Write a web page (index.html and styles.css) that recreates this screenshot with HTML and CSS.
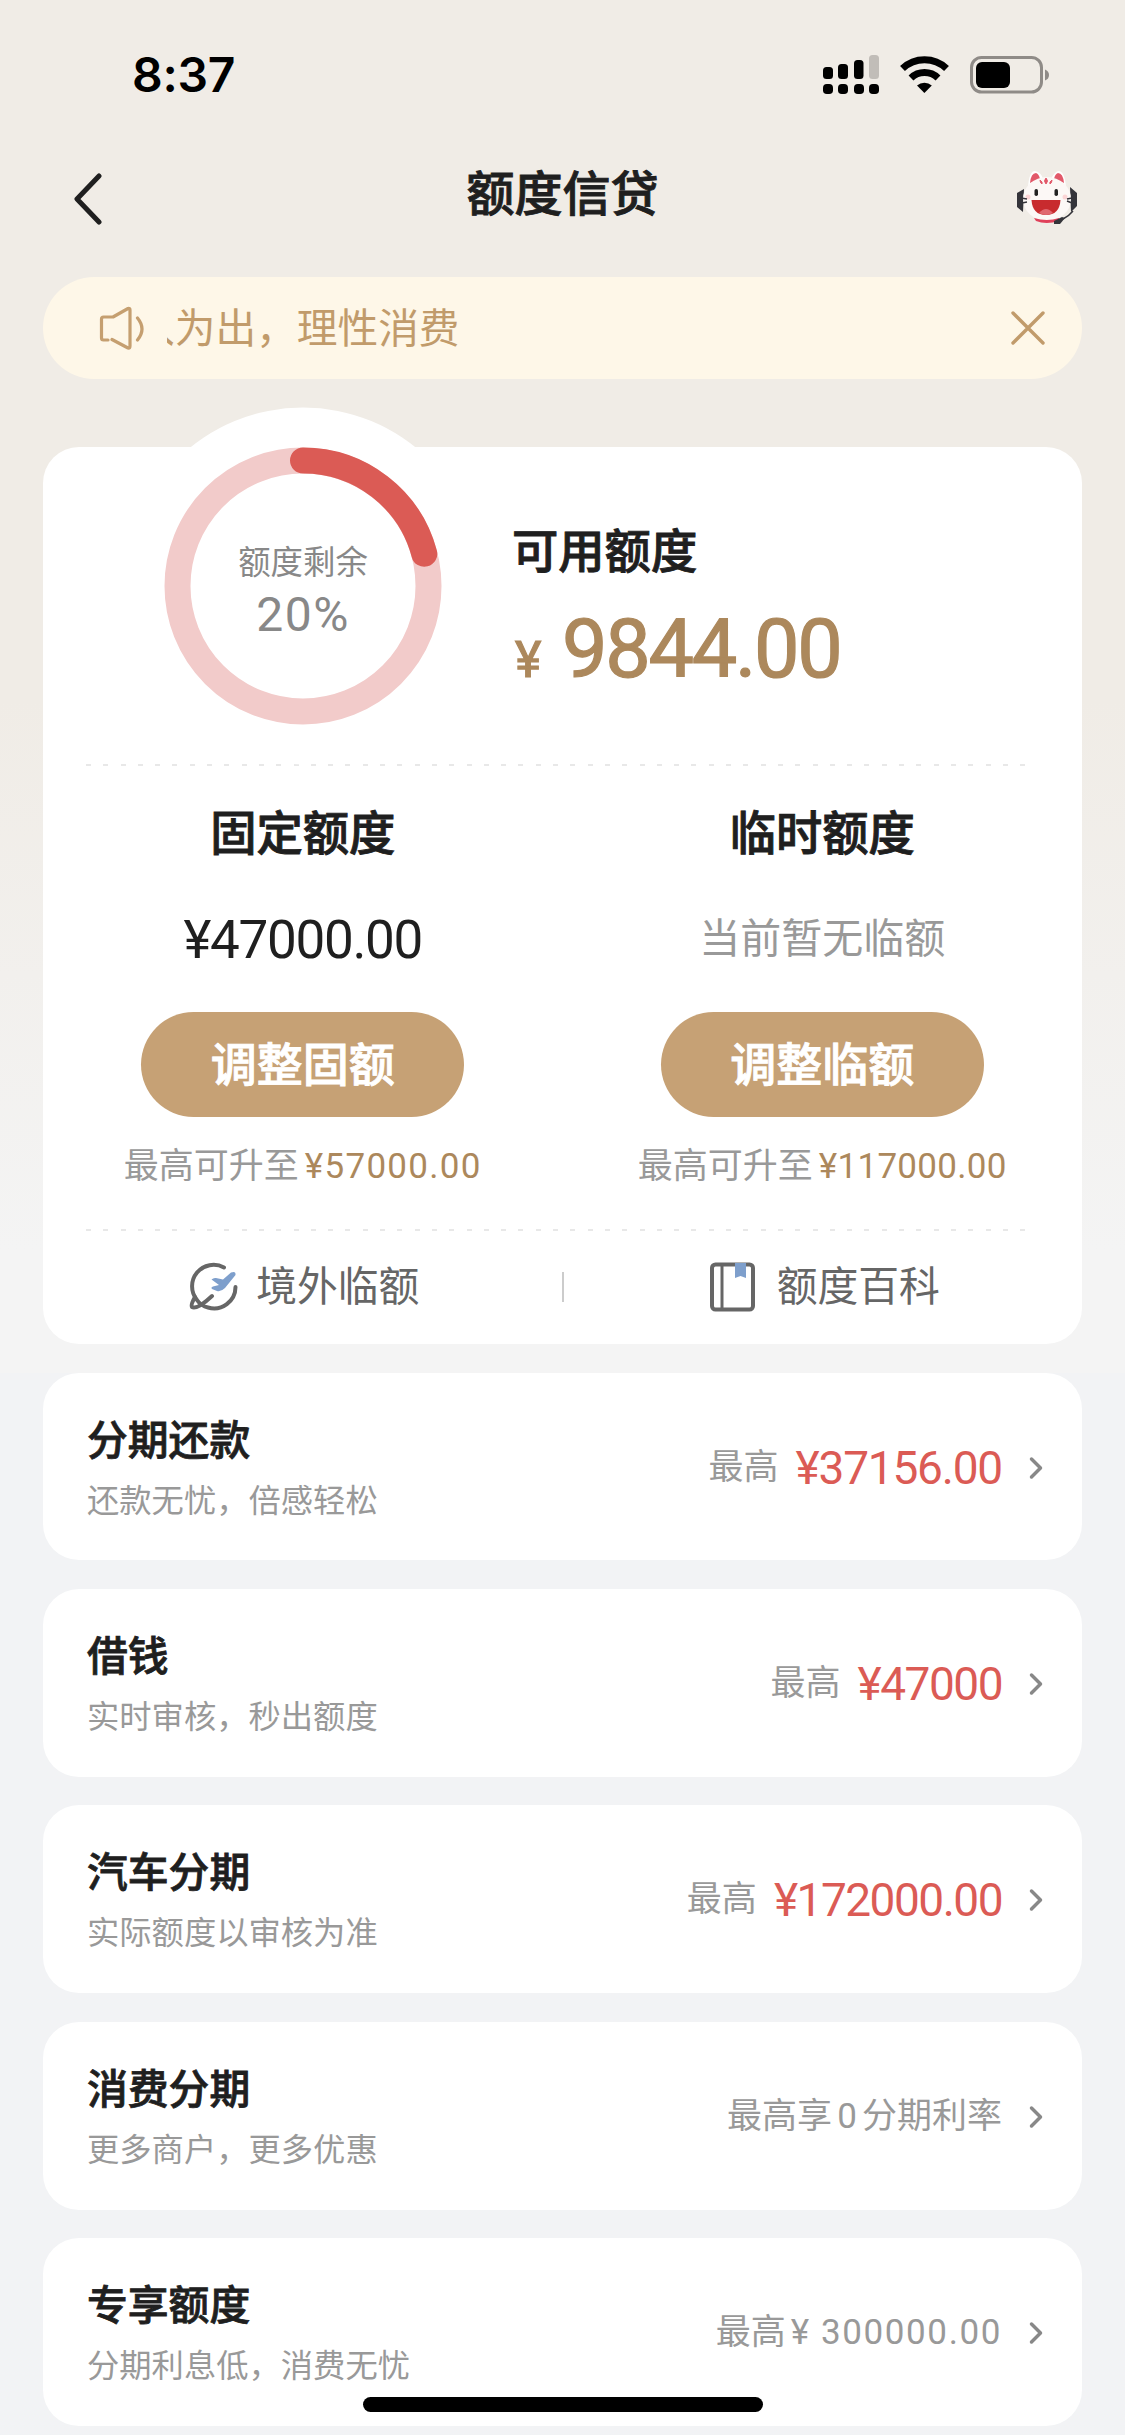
FILE: index.html
```html
<!DOCTYPE html>
<html lang="zh-CN">
<head>
<meta charset="utf-8">
<title>额度信贷</title>
<link rel="stylesheet" href="styles.css">
</head>
<body>
<div class="screen">
  <div class="status">
    <span class="time">8:37</span>
    <svg class="status-icons" width="228" height="44" viewBox="0 0 228 44">
      <rect x="0" y="13" width="10" height="12" rx="3.5"/><rect x="15" y="10" width="10" height="15" rx="3.5"/><rect x="31" y="6" width="9.500" height="19" rx="3.500"/><rect x="46" y="1" width="10" height="24" rx="3.500" fill="#c1bdb8"/>
      <rect x="0" y="30" width="10" height="10" rx="3.800"/><rect x="15" y="30" width="10" height="10" rx="3.800"/><rect x="31" y="30" width="10" height="10" rx="3.800"/><rect x="46" y="30" width="10" height="10" rx="3.800"/>
      <g fill="none" stroke="#000" stroke-width="7"><path d="M79.500 14.500a32 32 0 0 1 44 0"/><path d="M88 24a19.500 19.500 0 0 1 27 0"/></g>
      <path d="M94 31.500a11 11 0 0 1 14.800 0L101.400 39z"/>
      <rect x="148.500" y="3.500" width="70" height="34.500" rx="10" fill="none" stroke="#8f8b87" stroke-width="3"/>
      <rect x="153" y="8" width="34" height="26" rx="6"/>
      <path d="M222 15.500q4 1.500 4 5.500t-4 5.500z" fill="#8f8b87"/>
    </svg>
  </div>

  <header class="nav">
    <svg class="back" width="30" height="52" viewBox="0 0 30 52"><path d="M26 3 4 26l22 23" fill="none" stroke="#1f1f1f" stroke-width="5" stroke-linecap="round" stroke-linejoin="round"/></svg>
    <h1>额度信贷</h1>
    <svg class="cat" width="62" height="56" viewBox="0 0 62 56">
      <path d="M8 19 1 23v14l6 5zM54 17l7 6v13l-6 6z" fill="#34343a"/>
      <path d="M12 18Q13 1 19 1q6 1 8 8l8 0Q39 1 43 1q6 1 7 17z" fill="#fff"/>
      <path d="M14 13q1-10 6-10 3 1 4 6zM48 13q-1-10-6-10-3 1-4 6z" fill="#e2596a"/>
      <ellipse cx="31" cy="29" rx="24" ry="22" fill="#fcf8f6"/>
      <path d="M18 48q13 4 25 0v3q-13 4-23 0z" fill="#e0405a"/>
      <path d="M30 8q3 3 0 6-3-3 0-6zM24 10q3 2 2 4-2-1-2-4zM36 10q-3 2-2 4 2-1 2-4z" fill="#e2596a" stroke="#e2596a"/>
      <rect x="18.500" y="19" width="3.500" height="7" rx="1.700" fill="#222"/><rect x="38.500" y="19" width="3.500" height="7" rx="1.700" fill="#222"/>
      <path d="M15.500 30h29q-1 15-14.500 15T15.500 30z" fill="#c82b2e"/>
      <path d="M23 43q7-8 14 0-7 4-14 0z" fill="#e0676f"/>
      <circle cx="12" cy="27" r="2.500" fill="#fbd5d6"/><circle cx="49" cy="27" r="2.500" fill="#fbd5d6"/>
      <path d="M5 28l6 1M6 33l5-1M51 29l5-1M51 31l5 2M57 41q-4 5-10 8" fill="none" stroke="#34343a" stroke-width="1.400"/>
      <path d="M38 51l8-4 3 1-5 6h-6z" fill="#34343a"/>
    </svg>
  </header>

  <div class="notice">
    <svg class="horn" width="48" height="44" viewBox="0 0 48 44" fill="none" stroke="#c59f70" stroke-width="3.200" stroke-linecap="round" stroke-linejoin="round"><path d="M9 34H4.500Q2.500 34 2.500 32V13Q2.500 11 4.500 11H14L29 2.500Q31 2 31 4V40Q31 42.500 29 42L13 33.500"/><path d="M38.500 12q9 11 0 22"/></svg>
    <div class="marquee"><span>入为出，理性消费</span></div>
    <svg class="close" width="34" height="34" viewBox="0 0 34 34"><path d="M2 2l30 30M32 2 2 32" stroke="#c19b6b" stroke-width="3.400" stroke-linecap="round"/></svg>
  </div>

  <section class="card quota">
    <div class="summary">
      <div class="gauge">
        <svg class="ring" width="358" height="358" viewBox="0 0 358 358">
          <circle cx="179" cy="179" r="178.500" fill="#fff"/>
          <circle cx="179" cy="179" r="125.500" fill="none" stroke="#f2cbca" stroke-width="26"/>
          <path d="M179 53.500A125.500 125.500 0 0 1 300.300 146.800" fill="none" stroke="#db5b55" stroke-width="26" stroke-linecap="round"/>
        </svg>
        <div class="gauge-text"><span class="gauge-label">额度剩余</span><span class="gauge-value">20%</span></div>
      </div>
      <div class="available">
        <h2>可用额度</h2>
        <p class="total"><span class="yen">¥</span><span class="total-num">9844.00</span></p>
      </div>
    </div>
    <div class="dash"></div>
    <div class="columns">
      <div class="col">
        <h2>固定额度</h2>
        <p class="fixed">¥47000.00</p>
        <button class="adjust">调整固额</button>
        <p class="upto">最高可升至<span class="gold">¥57000.00</span></p>
      </div>
      <div class="col">
        <h2>临时额度</h2>
        <p class="none">当前暂无临额</p>
        <button class="adjust">调整临额</button>
        <p class="upto">最高可升至<span class="gold tight">¥117000.00</span></p>
      </div>
    </div>
    <div class="dash"></div>
    <div class="links">
      <div class="link">
        <svg width="50" height="50" viewBox="0 0 50 50"><g fill="none" stroke="#666" stroke-width="4" stroke-linecap="round" stroke-linejoin="round"><path d="M36 5.500A21.500 21.500 0 0 0 9 38Q13 44 20 45.500A21.500 21.500 0 0 0 47.500 25"/><path d="M7 35Q2.500 43 4 45Q9 48 24 34"/></g><path d="M23.500 17.500q2-2 4.500-1.500l7 1.500 8-7q5-2 4.500 2.500L37 26q-4 4-8 3l-5-2q-2-2 3-3l4-1z" fill="#7e9fcc"/></svg>
        <span>境外临额</span>
      </div>
      <i class="divider"></i>
      <div class="link">
        <svg width="50" height="50" viewBox="0 0 50 50"><rect x="3" y="2.500" width="41" height="45" rx="3.500" fill="none" stroke="#666" stroke-width="4"/><path d="M13 3v44" stroke="#666" stroke-width="3"/><path d="M26 1h11v15l-5.500-2-5.500 2z" fill="#7e9fcc"/></svg>
        <span>额度百科</span>
      </div>
    </div>
  </section>

  <section class="card row">
    <div class="info"><h3>分期还款</h3><p>还款无忧，倍感轻松</p></div>
    <div class="value">最高<span class="red loose">¥37156.00</span></div>
    <svg class="chev" width="14" height="24" viewBox="0 0 14 24"><path d="M2.500 3l9 9-9 9"/></svg>
  </section>
  <section class="card row">
    <div class="info"><h3>借钱</h3><p>实时审核，秒出额度</p></div>
    <div class="value">最高<span class="red">¥47000</span></div>
    <svg class="chev" width="14" height="24" viewBox="0 0 14 24"><path d="M2.500 3l9 9-9 9"/></svg>
  </section>
  <section class="card row">
    <div class="info"><h3>汽车分期</h3><p>实际额度以审核为准</p></div>
    <div class="value">最高<span class="red">¥172000.00</span></div>
    <svg class="chev" width="14" height="24" viewBox="0 0 14 24"><path d="M2.500 3l9 9-9 9"/></svg>
  </section>
  <section class="card row">
    <div class="info"><h3>消费分期</h3><p>更多商户，更多优惠</p></div>
    <div class="value">最高享<span class="zero">0</span>分期利率</div>
    <svg class="chev" width="14" height="24" viewBox="0 0 14 24"><path d="M2.500 3l9 9-9 9"/></svg>
  </section>
  <section class="card row">
    <div class="info"><h3>专享额度</h3><p>分期利息低，消费无忧</p></div>
    <div class="value">最高<span class="plain">¥ 300000.00</span></div>
    <svg class="chev" width="14" height="24" viewBox="0 0 14 24"><path d="M2.500 3l9 9-9 9"/></svg>
  </section>
  <div class="home"></div>
</div>
</body>
</html>
```
FILE: styles.css
```css
* { box-sizing: border-box; margin: 0; padding: 0; }
body { background: #f2f3f5; }
.screen {
  position: relative;
  width: 1125px;
  height: 2435px;
  overflow: hidden;
  padding: 0 43px;
  font-family: Roboto, "Noto Sans CJK SC", sans-serif;
  color: #1f1f1f;
  background: linear-gradient(#f0ece6 0, #f0ece6 700px, #f4f4f4 1250px, #f4f4f4 1373px, #f2f3f5 1373px);
}
.status { height: 150px; padding: 51px 31px 0 89px; display: flex; justify-content: space-between; align-items: flex-start; }
.time { font: 600 48px/48px Inter, sans-serif; color: #000; letter-spacing: -0.3px; }
.status-icons { margin-top: 3px; }
.nav { height: 127px; padding: 0 4px 0 30px; display: flex; justify-content: space-between; align-items: flex-start; }
.back { margin-top: 23px; }
.nav h1 { font-size: 48px; line-height: 56px; font-weight: 500; margin-top: 17px; width: 200px; margin-left: 6px; text-align: center; white-space: nowrap; -webkit-text-stroke: 0.9px; }
.cat { margin-top: 20px; }
.notice { height: 102px; border-radius: 51px; background: #fef7e8; display: flex; align-items: center; padding: 0 37px 0 56px; color: #c19b6b; font-size: 40.700px; line-height: 60px; }
.marquee { flex: 1; margin-left: 20px; padding-top: 2px; overflow: hidden; }
.marquee span { display: block; margin-left: -33px; white-space: nowrap; }
.card { background: #fff; border-radius: 36px; }
.quota { margin-top: 68px; height: 897px; }
.summary { height: 317px; display: flex; }
.gauge { position: relative; width: 469px; height: 277px; }
.ring { position: absolute; left: 81px; top: -40.500px; }
.gauge-text { position: relative; width: 520px; padding-top: 95px; display: flex; flex-direction: column; align-items: center; color: #888; }
.gauge-label { font-size: 32.400px; line-height: 42px; }
.gauge-value { font-size: 48px; line-height: 54px; margin-top: 4px; letter-spacing: 1.500px; }
h2 { font-size: 46.300px; line-height: 56px; font-weight: 500; -webkit-text-stroke: 0.9px; }
.available { padding-top: 77px; }
.total { display: flex; align-items: baseline; color: #ac885c; margin-top: 22px; -webkit-text-stroke: 1.2px; }
.yen { font-size: 50px; width: 50px; padding-left: 3px; }
.total-num { font-size: 81px; line-height: 96px; letter-spacing: -2.300px; }
.dash { height: 2px; margin: 0 56px 0 43px; background: repeating-linear-gradient(90deg, #e8e8e8 0 5px, transparent 5px 17.300px); }
.columns { display: flex; height: 463px; }
.col { flex: 1; display: flex; flex-direction: column; align-items: center; padding-top: 40px; }
.fixed, .none { height: 60px; line-height: 60px; margin-top: 47px; }
.fixed { font-size: 53px; letter-spacing: -1.300px; padding-top: 1px; }
.none { font-size: 41px; color: #999; }
.adjust { width: 323px; height: 105px; padding-top: 1px; margin-top: 43px; border: 0; border-radius: 53px; background: #c6a175; color: #fff; font: 500 46px/60px Roboto, "Noto Sans CJK SC", sans-serif; -webkit-text-stroke: 0.9px; }
.upto { font-size: 35px; line-height: 50px; margin-top: 25px; color: #999; white-space: nowrap; }
.gold { color: #ac885c; letter-spacing: 1.300px; margin-left: 6px; }
.gold.tight { letter-spacing: 0.3px; }
.links { display: flex; align-items: center; height: 112px; }
.link { flex: 1; display: flex; align-items: center; justify-content: center; gap: 18px; padding-left: 3px; font-size: 40.800px; line-height: 60px; color: #666; }
.divider { width: 2px; height: 30px; background: #ccc; }
.row { margin-top: 28.700px; height: 187.700px; display: flex; align-items: center; padding: 2px 39px 0 44px; }
.info { flex: 1; }
.info h3 { font-size: 40.800px; line-height: 60px; font-weight: 500; -webkit-text-stroke: 0.8px; }
.info p { font-size: 32.300px; line-height: 48px; color: #999; margin-top: 6px; }
.value { display: flex; align-items: center; font-size: 35px; line-height: 50px; color: #999; white-space: nowrap; }
.red { color: #db5b55; font-size: 46px; margin-left: 17px; letter-spacing: -1.500px; }
.red.loose { letter-spacing: -1.200px; }
.zero { width: 30px; text-align: center; }
.plain { margin-left: 5px; letter-spacing: 1.600px; }
.chev { margin-left: 27px; fill: none; stroke: #888; stroke-width: 3.500; stroke-linecap: round; stroke-linejoin: round; }
.home { position: absolute; left: 363px; top: 2397px; width: 400px; height: 15px; border-radius: 8px; background: #000; }
```
